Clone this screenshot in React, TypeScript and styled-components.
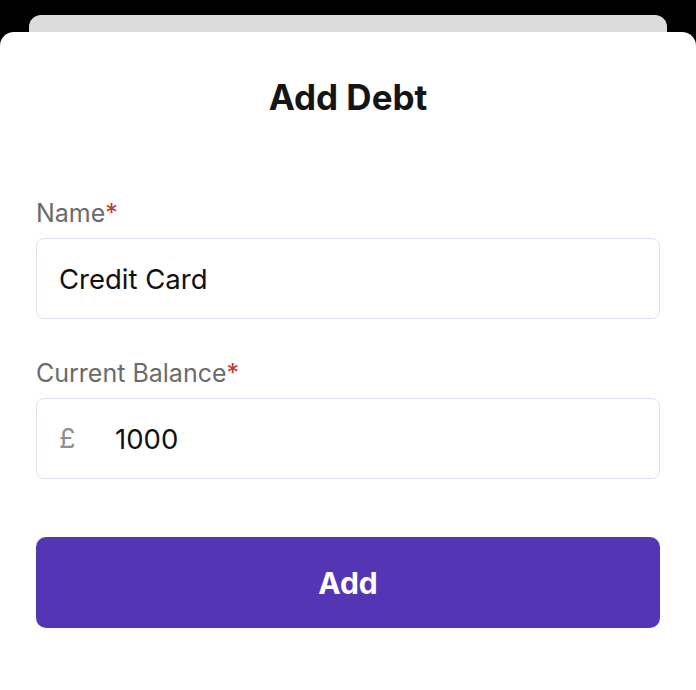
import styled, { createGlobalStyle } from "styled-components";

const GlobalStyle = createGlobalStyle`
    * {
        box-sizing: border-box;
    }

    body {
        margin: 0;
        background: #000;
        font-family: Inter, "Noto Sans", "Liberation Sans", sans-serif;
    }
`;

const Screen = styled.div`
    height: 690px;
    padding-top: 15px;
    display: flex;
    flex-direction: column;
    overflow: hidden;
`;

const BackCard = styled.div`
    height: 17px;
    margin: 0 29px;
    background: #dcdcdc;
    border-radius: 12px 12px 0 0;
    flex-shrink: 0;
`;

const Sheet = styled.div`
    flex: 1;
    background: #fff;
    border-radius: 14px 14px 0 0;
    padding: 45px 36px 0;
    display: flex;
    flex-direction: column;
`;

const Title = styled.h1`
    margin: 0 0 81px;
    font-size: 35px;
    line-height: 40px;
    font-weight: 700;
    color: #151515;
    text-align: center;
`;

const Field = styled.div<{ $last?: boolean }>`
    display: flex;
    flex-direction: column;
    gap: 10px;
    margin-bottom: ${props => (props.$last ? "58px" : "39px")};
`;

const Label = styled.label`
    font-size: 25px;
    line-height: 30px;
    font-weight: 400;
    color: #6b6b6b;

    span {
        color: #c8352b;
    }
`;

const InputBox = styled.div`
    height: 81px;
    border: 1.5px solid #dfdff0;
    border-radius: 8px;
    display: flex;
    align-items: center;
    padding-left: 22px;
    background: #fff;
`;

const Prefix = styled.span`
    width: 56px;
    font-size: 27px;
    color: #8e8e93;
`;

const TextInput = styled.input`
    flex: 1;
    min-width: 0;
    border: 0;
    outline: none;
    background: transparent;
    padding: 0;
    font-family: inherit;
    font-size: 27.5px;
    color: #111;
`;

const SubmitButton = styled.button`
    height: 91px;
    border: 0;
    border-radius: 10px;
    background: #5436b5;
    color: #fff;
    font-family: inherit;
    font-size: 30px;
    font-weight: 700;
    cursor: pointer;
`;

const App = () => {
    return (
        <>
            <GlobalStyle />
            <Screen>
                <BackCard />
                <Sheet>
                    <Title>Add Debt</Title>

                    <Field>
                        <Label>Name<span>*</span></Label>
                        <InputBox>
                            <TextInput defaultValue="Credit Card" />
                        </InputBox>
                    </Field>

                    <Field $last>
                        <Label>Current Balance<span>*</span></Label>
                        <InputBox>
                            <Prefix>£</Prefix>
                            <TextInput defaultValue="1000" inputMode="decimal" />
                        </InputBox>
                    </Field>

                    <SubmitButton>Add</SubmitButton>
                </Sheet>
            </Screen>
        </>
    );
};

export default App;
